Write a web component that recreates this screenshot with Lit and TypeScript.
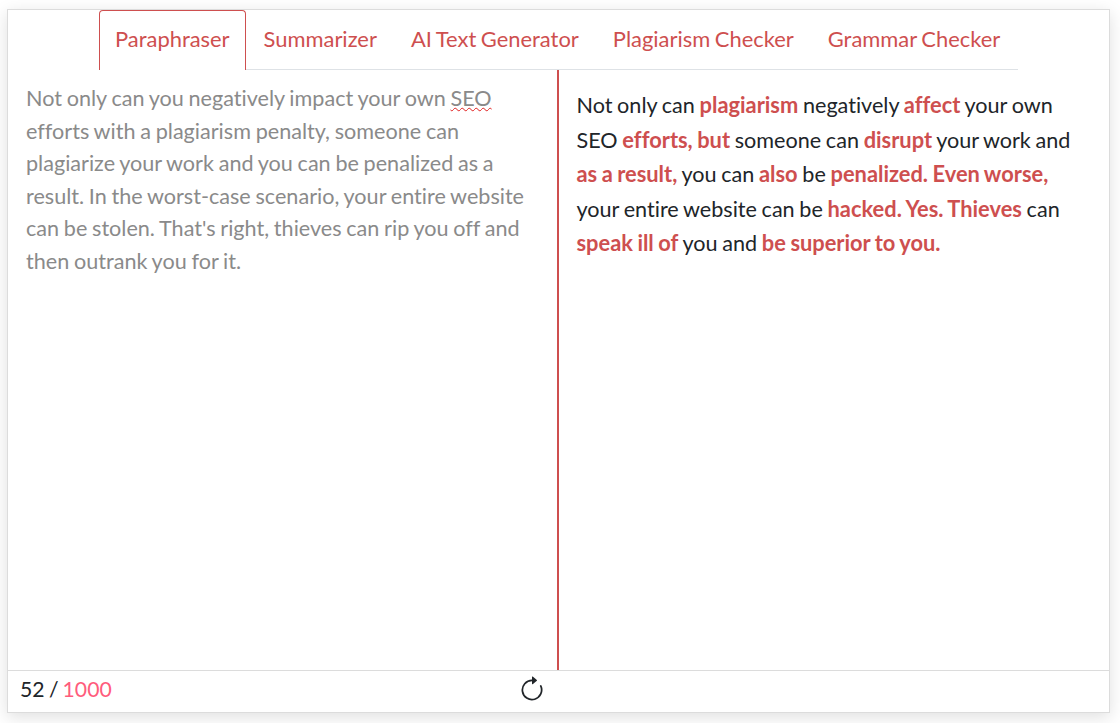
import { LitElement, css, html } from "lit";
import { customElement } from "lit/decorators.js";

const TABS = ["Paraphraser", "Summarizer", "AI Text Generator", "Plagiarism Checker", "Grammar Checker"];

@customElement("app-root")
export class AppRoot extends LitElement {
  static styles = css`
    :host {
      display: block;
      height: 723px;
      box-sizing: border-box;
      padding: 9px 10px 10px 7px;
      background: #fff;
      font-family: Lato, sans-serif;
      font-variant-ligatures: none;
      overflow: hidden;
    }
    .card {
      height: 704px;
      box-sizing: border-box;
      background: #fff;
      border: 1px solid #dcdcdc;
      box-shadow: 0 4px 16px rgba(0, 0, 0, 0.13);
      display: flex;
      flex-direction: column;
    }
    .tabs {
      display: flex;
      height: 59px;
      flex: none;
      margin: 0 91px;
      border-bottom: 1px solid #dee2e6;
    }
    .tab {
      padding: 0 15px;
      margin-right: 2px;
      font-size: 21.92px;
      line-height: 56px;
      word-spacing: -1px;
      color: #ce4f4f;
      border: 1px solid transparent;
      border-bottom: none;
      white-space: nowrap;
    }
    .tab.active {
      border-color: #ce4f4f;
      border-radius: 4px 4px 0 0;
      background: #fff;
      margin-bottom: -1px;
    }
    .panes {
      flex: 1;
      display: flex;
      min-height: 0;
    }
    .left {
      width: 551px;
      flex: none;
      box-sizing: border-box;
      padding: 12px 18px;
      font-size: 21.6px;
      line-height: 32.6px;
      word-spacing: -0.8px;
      color: #8a8a8a;
      border-right: 2px solid #ce4f4f;
    }
    .spell {
      text-decoration: underline wavy #e02020 1px;
    }
    .right {
      flex: 1;
      padding: 18px 17.5px;
      font-size: 21.6px;
      line-height: 34.56px;
      word-spacing: -0.85px;
      color: #212529;
    }
    .right b {
      color: #ce4f4f;
      font-weight: 700;
      font-size: 21.85px;
      line-height: 1;
    }
    .foot {
      height: 42px;
      flex: none;
      box-sizing: border-box;
      border-top: 1px solid #dcdcdc;
      display: flex;
      align-items: center;
      padding: 0 0 6px 12px;
      position: relative;
      font-size: 21.2px;
      word-spacing: -1px;
      color: #212529;
    }
    .max {
      color: #ff5c7c;
      margin-left: 4px;
    }
    .reload {
      position: absolute;
      left: 510px;
      top: 5px;
      width: 28px;
      height: 28px;
    }
  `;

  render() {
    return html`<div class="card">
      <div class="tabs">
        ${TABS.map((t, i) => html`<div class="tab ${i === 0 ? "active" : ""}">${t}</div>`)}
      </div>
      <div class="panes">
        <div class="left">
          Not only can you negatively impact your own <span class="spell">SEO</span>
          efforts with a plagiarism penalty, someone can plagiarize your work and you can be
          penalized as a result. In the worst-case scenario, your entire website can be stolen.
          That's right, thieves can rip you off and then outrank you for it.
        </div>
        <div class="right">
          Not only can <b>plagiarism</b> negatively <b>affect</b> your own SEO <b>efforts, but</b>
          someone can <b>disrupt</b> your work and <b>as a result,</b> you can <b>also</b> be
          <b>penalized. Even worse,</b> your entire website can be <b>hacked. Yes. Thieves</b> can
          <b>speak ill of</b> you and <b>be superior to you.</b>
        </div>
      </div>
      <div class="foot">
        <span>52 /</span><span class="max">1000</span>
        <svg class="reload" viewBox="0 0 16 16" fill="#212529">
          <path fill-rule="evenodd" d="M8 3a5 5 0 1 0 4.546 2.914.5.5 0 0 1 .908-.417A6 6 0 1 1 8 2z" />
          <path d="M8 4.466V.534a.25.25 0 0 1 .41-.192l2.36 1.966c.12.1.12.284 0 .384L8.41 4.658A.25.25 0 0 1 8 4.466" />
        </svg>
      </div>
    </div>`;
  }
}
